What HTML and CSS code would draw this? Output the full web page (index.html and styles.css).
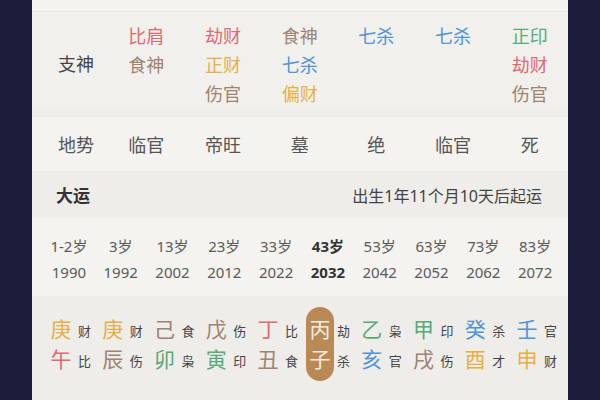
FILE: index.html
```html
<!DOCTYPE html>
<html lang="zh">
<head>
<meta charset="utf-8">
<link rel="stylesheet" href="styles.css">
</head>
<body>
<div class="card">
  <div class="strip"></div>
  <div class="grid7 zhishen">
    <div class="label">支神</div>
    <div class="cell"><span class="red">比肩</span><span class="tan">食神</span></div>
    <div class="cell"><span class="red">劫财</span><span class="gold">正财</span><span class="tan">伤官</span></div>
    <div class="cell"><span class="tan">食神</span><span class="blue">七杀</span><span class="gold">偏财</span></div>
    <div class="cell"><span class="blue">七杀</span></div>
    <div class="cell"><span class="blue">七杀</span></div>
    <div class="cell"><span class="green">正印</span><span class="red">劫财</span><span class="tan">伤官</span></div>
  </div>
  <div class="grid7 dishi">
    <div class="label">地势</div>
    <div>临官</div><div>帝旺</div><div>墓</div><div>绝</div><div>临官</div><div>死</div>
  </div>
  <div class="dayun-head">
    <span class="title">大运</span>
    <span class="note">出生1年11个月10天后起运</span>
  </div>
  <div class="grid10 years">
    <div class="yr"><span>1-2岁</span><span>1990</span></div>
    <div class="yr"><span>3岁</span><span>1992</span></div>
    <div class="yr"><span>13岁</span><span>2002</span></div>
    <div class="yr"><span>23岁</span><span>2012</span></div>
    <div class="yr"><span>33岁</span><span>2022</span></div>
    <div class="yr now"><span>43岁</span><span>2032</span></div>
    <div class="yr"><span>53岁</span><span>2042</span></div>
    <div class="yr"><span>63岁</span><span>2052</span></div>
    <div class="yr"><span>73岁</span><span>2062</span></div>
    <div class="yr"><span>83岁</span><span>2072</span></div>
  </div>
  <div class="grid10 pillars">
    <div class="pillar"><div class="gz"><span class="gold">庚</span><span class="red">午</span></div><div class="ss"><span>财</span><span>比</span></div></div>
    <div class="pillar"><div class="gz"><span class="gold">庚</span><span class="tan">辰</span></div><div class="ss"><span>财</span><span>伤</span></div></div>
    <div class="pillar"><div class="gz"><span class="tan">己</span><span class="green">卯</span></div><div class="ss"><span>食</span><span>枭</span></div></div>
    <div class="pillar"><div class="gz"><span class="tan">戊</span><span class="green">寅</span></div><div class="ss"><span>伤</span><span>印</span></div></div>
    <div class="pillar"><div class="gz"><span class="red">丁</span><span class="tan">丑</span></div><div class="ss"><span>比</span><span>食</span></div></div>
    <div class="pillar"><div class="gz active"><span>丙</span><span>子</span></div><div class="ss"><span>劫</span><span>杀</span></div></div>
    <div class="pillar"><div class="gz"><span class="green">乙</span><span class="blue">亥</span></div><div class="ss"><span>枭</span><span>官</span></div></div>
    <div class="pillar"><div class="gz"><span class="green">甲</span><span class="tan">戌</span></div><div class="ss"><span>印</span><span>伤</span></div></div>
    <div class="pillar"><div class="gz"><span class="blue">癸</span><span class="gold">酉</span></div><div class="ss"><span>杀</span><span>才</span></div></div>
    <div class="pillar"><div class="gz"><span class="blue">壬</span><span class="gold">申</span></div><div class="ss"><span>官</span><span>财</span></div></div>
  </div>
</div>
</body>
</html>
```
FILE: styles.css
```css
* { box-sizing: border-box; }
html, body { margin: 0; padding: 0; }
body {
  background: #1c1c3b;
  width: 600px;
  height: 400px;
  overflow: hidden;
  font-family: "Noto Sans", "Noto Sans CJK SC", sans-serif;
}
.card {
  margin: 0 32px;
  width: 536px;
  height: 400px;
  background: #efedea;
  overflow: hidden;
}
.strip { height: 12px; background: #f4f3f0; border-bottom: 1px solid #ebe9e5; }

.red { color: #dc6a72; }
.tan { color: #9e8370; }
.gold { color: #e4b046; }
.blue { color: #4f94d6; }
.green { color: #5aa878; }

.grid7 {
  display: grid;
  grid-template-columns: 64px repeat(6, 1fr);
  padding-left: 12px;
  font-size: 18px;
}
.zhishen {
  height: 99px;
  background: #f2f0ed;
  padding-top: 10px;
}
.zhishen .label {
  color: #444;
  text-align: center;
  align-self: center;
  padding-top: 2px;
  padding-bottom: 10px;
}
.zhishen .cell {
  display: flex;
  flex-direction: column;
  align-items: center;
  line-height: 29px;
}
.dishi {
  margin-top: 6px;
  height: 54px;
  background: #f4f3f0;
  align-items: center;
  color: #555;
  text-align: center;
}
.dayun-head {
  height: 45px;
  display: flex;
  align-items: center;
  justify-content: space-between;
  padding: 2px 26px 0 24px;
}
.dayun-head .title { font-size: 17px; font-weight: 700; color: #333; }
.dayun-head .note { font-size: 16px; color: #444; }

.grid10 {
  display: grid;
  grid-template-columns: repeat(10, 1fr);
  padding: 0 7px 0 11px;
}
.years {
  margin-top: 2px;
  height: 78px;
  background: #f4f3f0;
  padding-top: 15px;
}
.yr {
  display: flex;
  flex-direction: column;
  align-items: center;
  color: #5a5a5a;
  font-size: 15px;
  line-height: 26px;
}
.yr.now { color: #333; font-weight: 700; }

.pillars {
  margin-top: 3px;
  padding-top: 8px;
}
.pillar {
  display: flex;
  align-items: center;
  justify-content: center;
  gap: 3px;
}
.gz {
  display: flex;
  flex-direction: column;
  align-items: center;
  font-size: 21px;
  line-height: 30px;
  width: 28px;
  padding: 7px 0;
}
.gz.active {
  background: #b98a55;
  color: #f7ede0;
  border-radius: 14px;
}
.ss {
  display: flex;
  flex-direction: column;
  font-size: 13px;
  line-height: 30px;
  color: #444;
  padding-top: 3px;
}
```
